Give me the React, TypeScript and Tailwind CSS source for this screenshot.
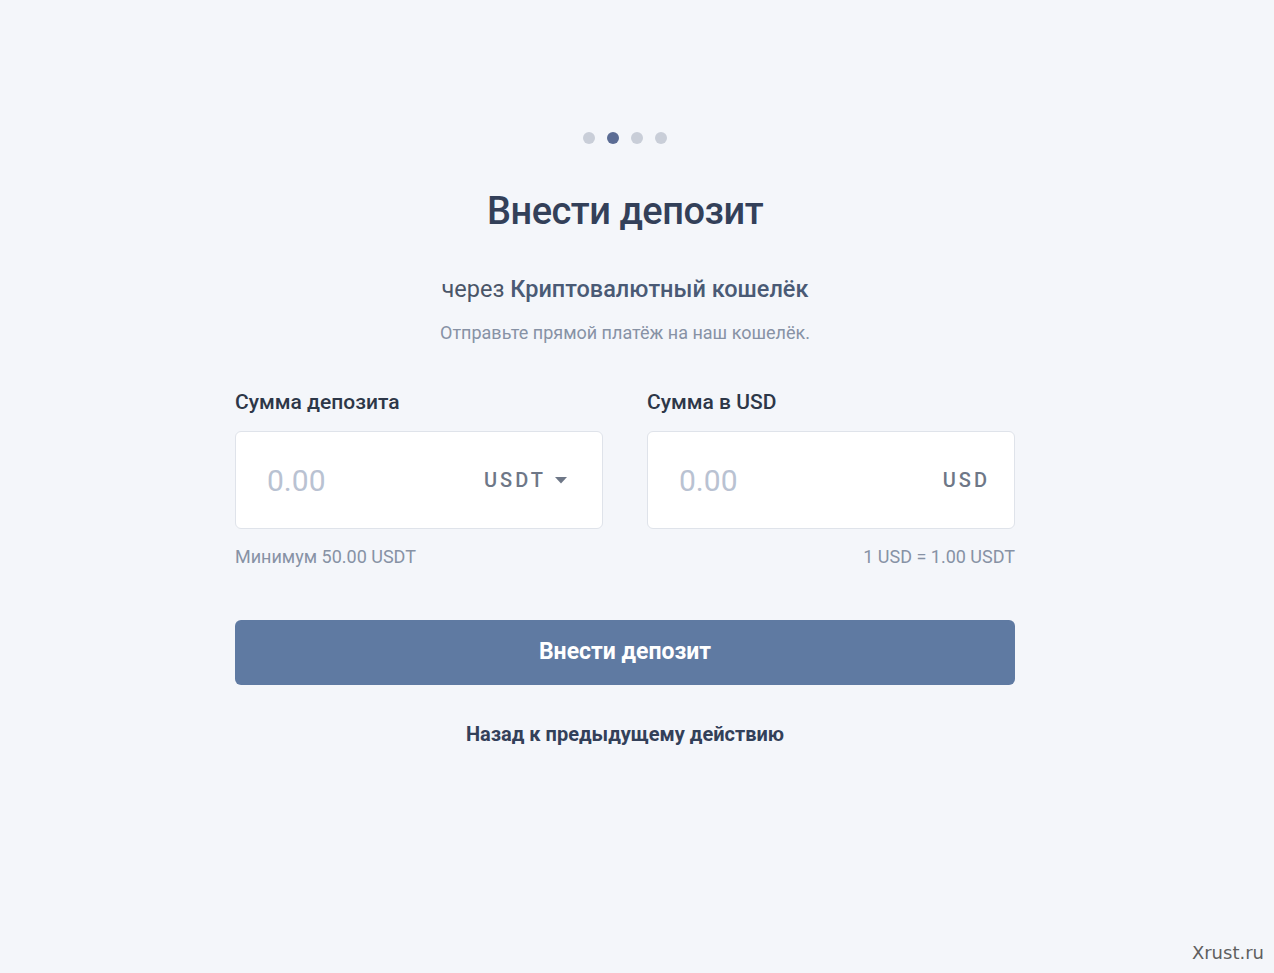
import React, { useState } from "react";

const Dots = ({ active }: { active: number }) => (
  <div className="flex items-center justify-center gap-3">
    {[0, 1, 2, 3].map((i) => (
      <span
        key={i}
        className={
          i === active
            ? "w-3 h-3 rounded-full bg-[#5b6c94]"
            : "w-3 h-3 rounded-full bg-[#c9ced8]"
        }
      />
    ))}
  </div>
);

const App = () => {
  const [amount, setAmount] = useState("");
  const [usd, setUsd] = useState("");

  return (
    <div
      className="min-h-screen bg-[#f4f6fa] flex flex-col items-center pt-[132px] pr-[24px] relative"
      style={{ fontFamily: "Roboto, 'Noto Sans', sans-serif" }}
    >
      <Dots active={1} />

      <h1 className="mt-[42px] text-[38px] leading-[50px] font-medium text-[#334059] tracking-[-0.5px]">
        Внести депозит
      </h1>

      <p className="mt-[38px] text-[23.5px] leading-[30px] text-[#4a5568]">
        через <span className="font-medium text-[#4a5a75]">Криптовалютный кошелёк</span>
      </p>
      <p className="mt-[17px] text-[18px] leading-[23px] text-[#8792a5]">
        Отправьте прямой платёж на наш кошелёк.
      </p>

      <div className="w-[780px] mt-[45px] grid grid-cols-2 gap-[44px]">
        <div>
          <label className="block text-[21px] leading-[26px] font-medium text-[#2d3748]">
            Сумма депозита
          </label>
          <div className="mt-[16px] h-[98px] bg-white border border-[#dfe3ea] rounded-md flex items-center pl-[31px] pr-[35px]">
            <input
              className="flex-1 min-w-0 bg-transparent text-[30px] text-[#334059] placeholder-[#b9c2d2] outline-none"
              placeholder="0.00"
              value={amount}
              onChange={(e) => setAmount(e.target.value)}
            />
            <button className="flex items-center gap-[9px] text-[20px] font-medium tracking-[3px] text-[#6e7787]">
              USDT
              <svg width="12" height="7" viewBox="0 0 12 7">
                <path d="M0 0h12L6 6.5z" fill="#6e7787" />
              </svg>
            </button>
          </div>
          <p className="mt-[16px] text-[18px] leading-[23px] text-[#8792a5]">
            Минимум 50.00 USDT
          </p>
        </div>

        <div>
          <label className="block text-[21px] leading-[26px] font-medium text-[#2d3748]">
            Сумма в USD
          </label>
          <div className="mt-[16px] h-[98px] bg-white border border-[#dfe3ea] rounded-md flex items-center pl-[31px] pr-[24px]">
            <input
              className="flex-1 min-w-0 bg-transparent text-[30px] text-[#334059] placeholder-[#b9c2d2] outline-none"
              placeholder="0.00"
              value={usd}
              onChange={(e) => setUsd(e.target.value)}
            />
            <span className="text-[20px] font-medium tracking-[3px] text-[#6e7787]">USD</span>
          </div>
          <p className="mt-[16px] text-right text-[18px] leading-[23px] text-[#8792a5]">
            1 USD = 1.00 USDT
          </p>
        </div>
      </div>

      <button className="mt-[52px] w-[780px] h-[65px] rounded-md bg-[#5f7aa2] text-white text-[23px] font-bold">
        Внести депозит
      </button>

      <a href="#" className="mt-[36px] text-[20px] leading-[26px] font-bold text-[#334059]">
        Назад к предыдущему действию
      </a>

      <div
        className="absolute right-[10px] bottom-[7px] text-[18px] text-[#5f5f5f]"
        style={{ fontFamily: "'DejaVu Sans', sans-serif" }}
      >
        Xrust.ru
      </div>
    </div>
  );
};

export default App;
